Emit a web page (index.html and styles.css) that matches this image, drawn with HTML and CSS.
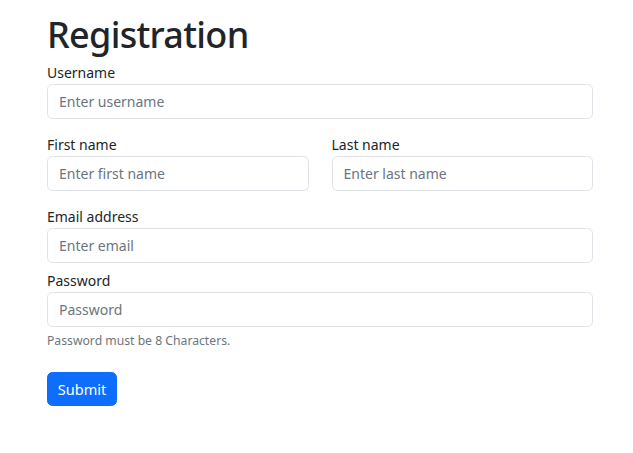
FILE: index.html
```html
<!DOCTYPE html>
<html lang="en">
<head>
<meta charset="utf-8">
<title>Registration</title>
<link rel="stylesheet" href="styles.css">
</head>
<body>
<main class="page">
  <h1 class="title">Registration</h1>
  <form class="form">
    <div class="field">
      <label class="label" for="username">Username</label>
      <input class="input" id="username" type="text" placeholder="Enter username">
    </div>
    <div class="field two-col">
      <div class="col">
        <label class="label" for="first">First name</label>
        <input class="input" id="first" type="text" placeholder="Enter first name">
      </div>
      <div class="col">
        <label class="label" for="last">Last name</label>
        <input class="input" id="last" type="text" placeholder="Enter last name">
      </div>
    </div>
    <div class="field field-tight">
      <label class="label" for="email">Email address</label>
      <input class="input" id="email" type="email" placeholder="Enter email">
    </div>
    <div class="field field-password">
      <label class="label" for="password">Password</label>
      <input class="input" id="password" type="password" placeholder="Password">
      <div class="help">Password must be 8 Characters.</div>
    </div>
    <button class="btn" type="submit">Submit</button>
  </form>
</main>
</body>
</html>
```
FILE: styles.css
```css
* { box-sizing: border-box; }
body {
  margin: 0;
  font-family: "Noto Sans", "Open Sans", sans-serif;
  color: #212529;
  background: #fff;
}
.page {
  padding: 13px 40px 0 47px;
}
.title {
  font-size: 36px;
  line-height: 44px;
  font-weight: 500;
  letter-spacing: -0.7px;
  margin: 0 0 5px;
}
.form {
  display: flex;
  flex-direction: column;
  align-items: stretch;
}
.field { margin-bottom: 15px; }
.field-tight { margin-bottom: 7px; }
.field-password { margin-bottom: 22px; }
.two-col {
  display: grid;
  grid-template-columns: 1fr 1fr;
  column-gap: 23px;
}
.label {
  display: block;
  font-size: 14px;
  line-height: 22px;
}
.input {
  display: block;
  width: 100%;
  height: 35px;
  padding: 0 11px;
  border: 1px solid #dee2e6;
  border-radius: 5.5px;
  font-family: inherit;
  font-size: 14px;
  color: #212529;
  background: #fff;
}
.input::placeholder { color: #6c757d; opacity: 1; }
.help {
  margin-top: 4px;
  font-size: 12.2px;
  line-height: 19px;
  color: #6c757d;
}
.btn {
  align-self: flex-start;
  width: 70px;
  height: 34px;
  padding: 0;
  border: 1px solid #0d6efd;
  border-radius: 5.5px;
  background: #0d6efd;
  color: #fff;
  font-family: inherit;
  font-size: 14.5px;
}
```
